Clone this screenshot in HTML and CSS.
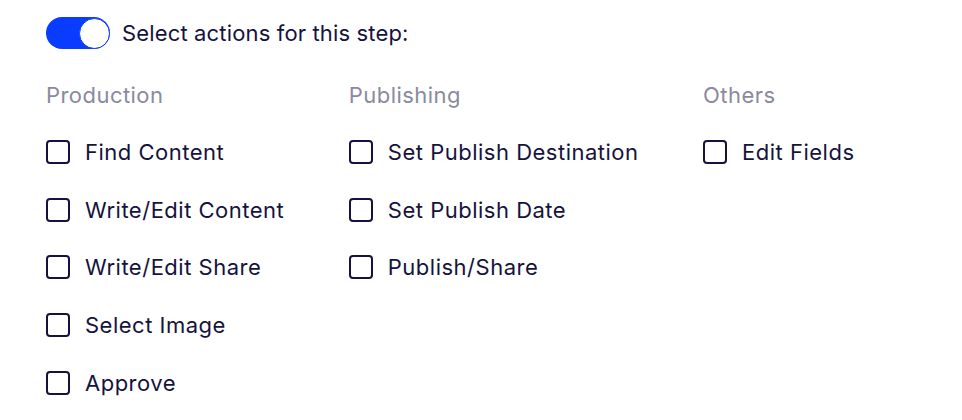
FILE: index.html
```html
<!DOCTYPE html>
<html>
<head>
<meta charset="utf-8">
<link rel="stylesheet" href="styles.css">
</head>
<body>
<div class="panel">
  <div class="toggle-row">
    <span class="toggle"><span class="knob"></span></span>
    <span class="toggle-label">Select actions for this step:</span>
  </div>
  <div class="groups">
    <div class="group">
      <div class="group-title">Production</div>
      <label class="item"><span class="box"></span>Find Content</label>
      <label class="item"><span class="box"></span>Write/Edit Content</label>
      <label class="item"><span class="box"></span>Write/Edit Share</label>
      <label class="item"><span class="box"></span>Select Image</label>
      <label class="item"><span class="box"></span>Approve</label>
    </div>
    <div class="group">
      <div class="group-title">Publishing</div>
      <label class="item"><span class="box"></span>Set Publish Destination</label>
      <label class="item"><span class="box"></span>Set Publish Date</label>
      <label class="item"><span class="box"></span>Publish/Share</label>
    </div>
    <div class="group">
      <div class="group-title">Others</div>
      <label class="item"><span class="box"></span>Edit Fields</label>
    </div>
  </div>
</div>
</body>
</html>
```
FILE: styles.css
```css
html, body {
  margin: 0;
  padding: 0;
  background: #ffffff;
}
body {
  font-family: Inter, "Liberation Sans", sans-serif;
  color: #15133d;
}
.panel {
  padding: 17px 46px 0 46px;
}
.toggle-row {
  display: flex;
  align-items: center;
  gap: 12px;
  height: 32px;
}
.toggle {
  width: 64px;
  height: 32px;
  border-radius: 16px;
  background: #0a3cff;
  display: flex;
  justify-content: flex-end;
  align-items: center;
  box-sizing: border-box;
}
.knob {
  width: 31px;
  height: 31px;
  border-radius: 50%;
  background: #ffffff;
  border: 1.5px solid #0a3cff;
  box-sizing: border-box;
}
.toggle-label {
  font-size: 22px;
  line-height: 26px;
  letter-spacing: 0.15px;
  color: #15133d;
}
.groups {
  display: flex;
  gap: 64.5px;
  margin-top: 33px;
}
.group {
  display: flex;
  flex-direction: column;
}
.group-title {
  font-size: 22px;
  line-height: 26px;
  letter-spacing: 0.45px;
  color: #8a8a9e;
  margin-bottom: 15px;
}
.item {
  display: flex;
  align-items: center;
  gap: 15px;
  height: 57.75px;
  font-size: 22px;
  letter-spacing: 0.5px;
  color: #15133d;
  white-space: nowrap;
}
.box {
  width: 24px;
  height: 24px;
  box-sizing: border-box;
  border: 2px solid #15133d;
  border-radius: 4px;
  flex: none;
}
```
